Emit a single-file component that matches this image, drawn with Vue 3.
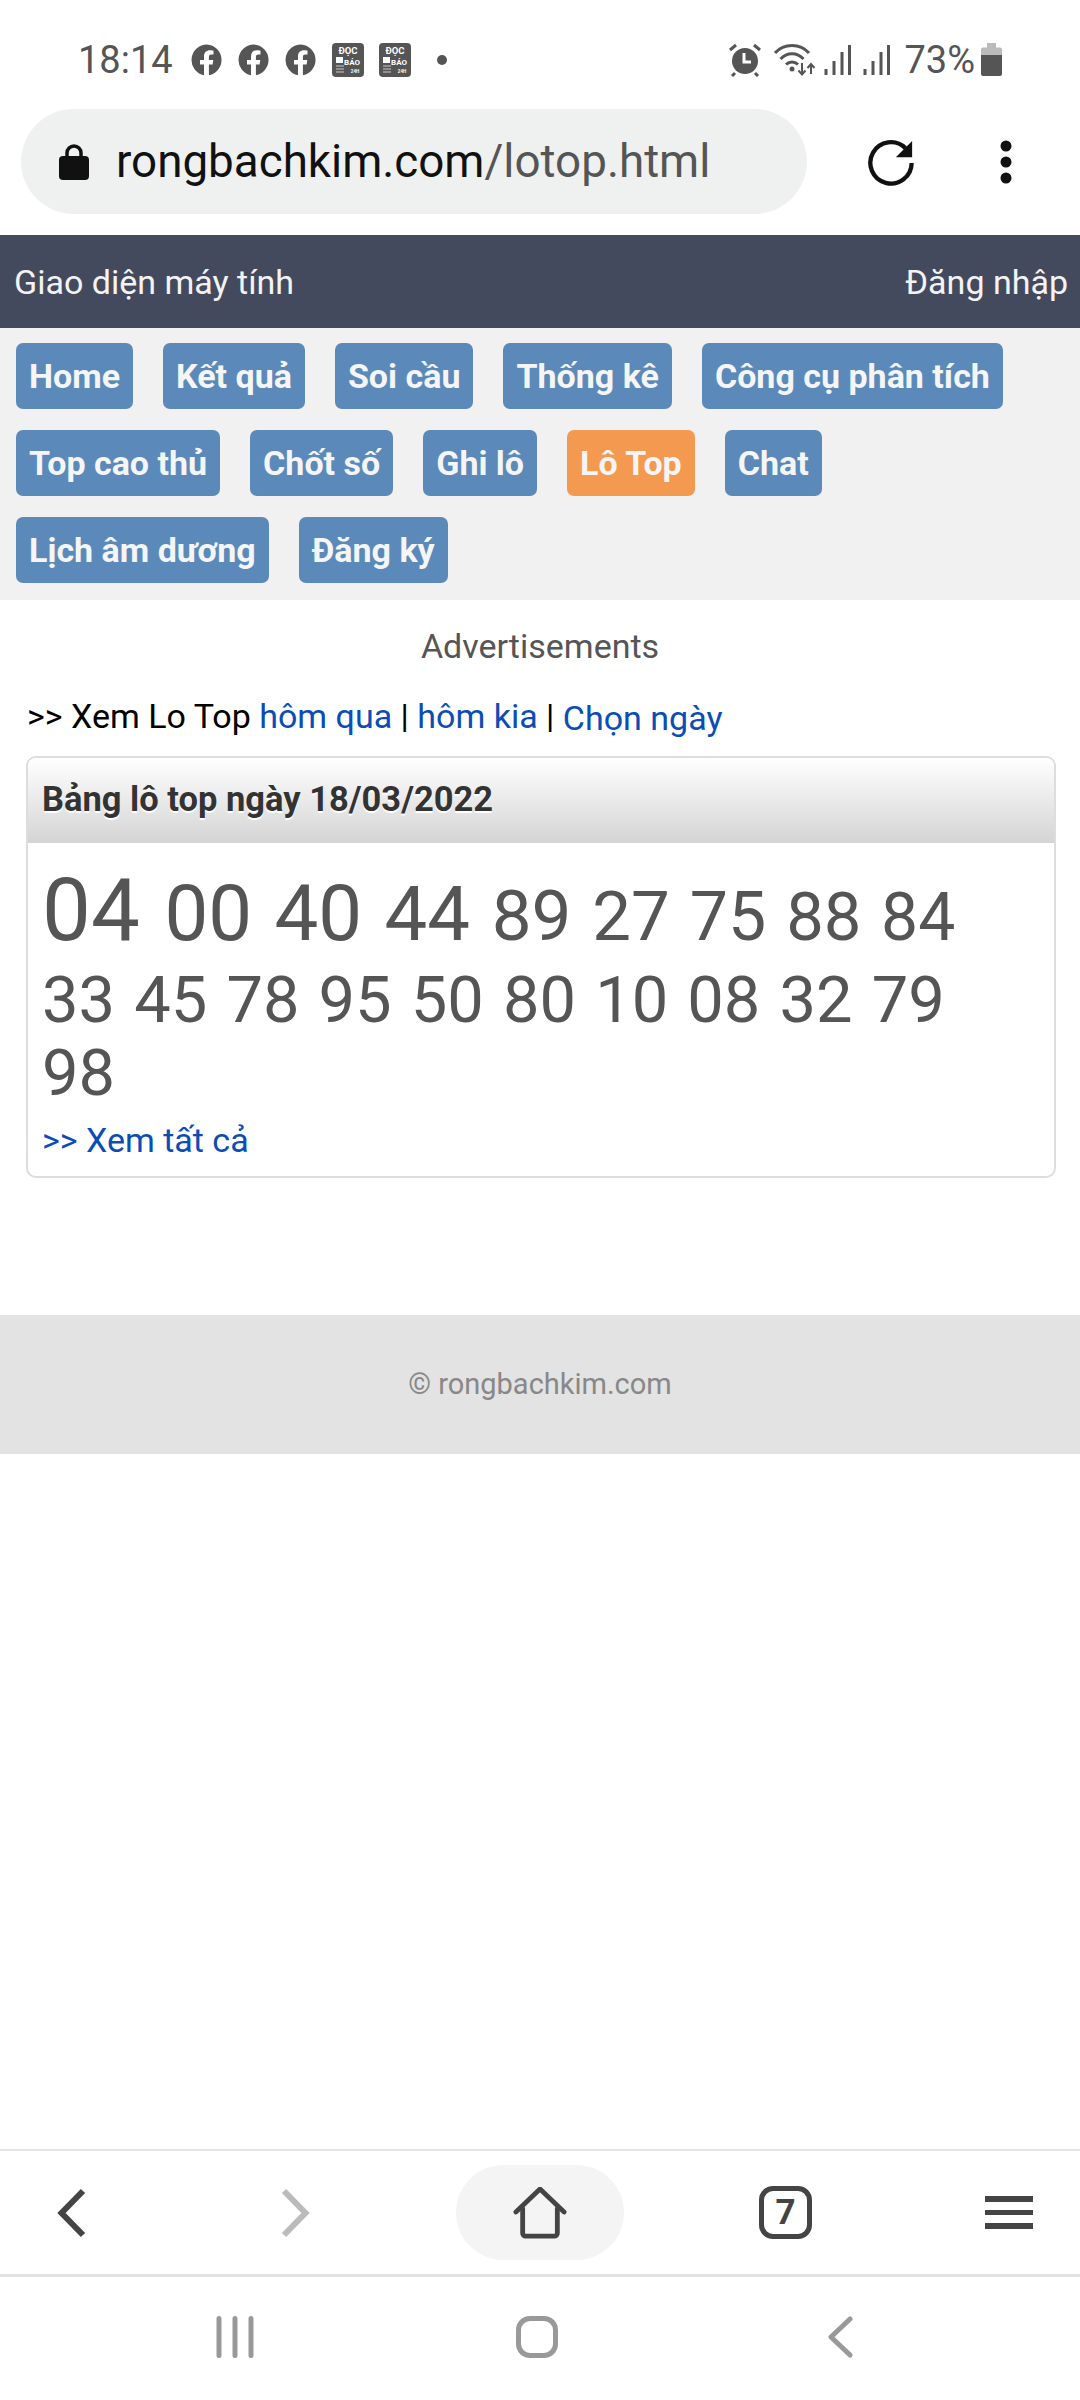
<script setup>
const navRows = [
  ["Home", "Kết quả", "Soi cầu", "Thống kê", "Công cụ phân tích"],
  ["Top cao thủ", "Chốt số", "Ghi lô", "Lô Top", "Chat"],
  ["Lịch âm dương", "Đăng ký"],
];

const topNumbers = [
  ["04", 87], ["00", 78], ["40", 78], ["44", 76], ["89", 71], ["27", 69], ["75", 68], ["88", 67], ["84", 66],
  ["33", 65], ["45", 65], ["78", 65], ["95", 65], ["50", 65], ["80", 65], ["10", 65], ["08", 65], ["32", 65], ["79", 65],
  ["98", 65],
];
</script>

<template>
  <div class="screen">
    <div class="status">
      <span class="time">18:14</span>
      <svg v-for="n in 3" :key="n" class="fb" viewBox="0 0 32 32" width="32" height="32">
        <path fill="#555" d="M16 0.5a15.5 15.5 0 0 0-3 30.7V20.5H9v-4.6h4v-3.4c0-4 2.4-6.2 6-6.2 1.7 0 3.5.3 3.500.3v3.900h-2c-2 0-2.600 1.200-2.600 2.500v2.900h4.400l-.7 4.600h-3.700v10.700A15.500 15.500 0 0 0 16 .5z"/>
      </svg>
      <svg v-for="n in 2" :key="'d' + n" class="doc" viewBox="0 0 32 34" width="32" height="34">
        <rect width="32" height="34" rx="4" fill="#555"/>
        <text x="16" y="11" class="doc-t" text-anchor="middle">ĐỌC</text>
        <rect x="4" y="14" width="7" height="6" fill="#fff"/>
        <text x="20" y="22" class="doc-s" text-anchor="middle">BÁO</text>
        <path d="M4 23h8M4 26h8M4 29h8" stroke="#ccc" stroke-width="1.2"/>
        <text x="23" y="30" class="doc-h" text-anchor="middle">24H</text>
      </svg>
      <span class="dot"></span>
      <span class="status-fill"></span>
      <svg class="alarm" viewBox="0 0 34 34" width="34" height="34">
        <circle cx="17" cy="18" r="13" fill="#555"/>
        <path d="M2 7l6-5M32 7l-6-5M7 30l-3 3M27 30l3 3" stroke="#555" stroke-width="3" fill="none"/>
        <path d="M16 10v9h7" stroke="#fff" stroke-width="3" fill="none"/>
      </svg>
      <svg class="wifi" viewBox="0 0 42 34" width="42" height="34">
        <path d="M1 10C10 0 26 0 35 10M6.500 16C13 9 23 9 29.500 16M12 21.500C15.500 18 20.500 18 24 21.500" stroke="#555" stroke-width="3" fill="none"/>
        <circle cx="18" cy="26" r="2.500" fill="#555"/>
        <path d="M28 20v11M24.500 27.500l3.500 4 3.500-4M37 31V21M33.500 25l3.500-4 3.500 4" stroke="#555" stroke-width="2" fill="none"/>
      </svg>
      <svg class="signal" viewBox="0 0 27 30" width="27" height="30">
        <path d="M2 30v-6M10 30V16M18 30V7M25.500 30V0" stroke="#555" stroke-width="3" fill="none"/>
      </svg>
      <svg class="signal second" viewBox="0 0 27 30" width="27" height="30">
        <path d="M2 30v-6M10 30V16M18 30V7M25.500 30V0" stroke="#555" stroke-width="3" fill="none"/>
      </svg>
      <span class="percent">73%</span>
      <svg class="battery" viewBox="0 0 21 33" width="21" height="33">
        <path d="M6 0h9v4.500h4a2 2 0 0 1 2 2V12H0V6.500a2 2 0 0 1 2-2h4z" fill="#bbb"/>
        <path d="M0 12h21v19a2 2 0 0 1-2 2H2a2 2 0 0 1-2-2z" fill="#555"/>
      </svg>
    </div>

    <div class="toolbar">
      <div class="urlbar">
        <svg class="lock" viewBox="0 0 30 36" width="30" height="36">
          <path d="M8 14V9a7 7 0 0 1 14 0v5" stroke="#111" stroke-width="3.500" fill="none"/>
          <rect y="12" width="30" height="24" rx="4" fill="#111"/>
        </svg>
        <span class="url">rongbachkim.com<span class="url-path">/lotop.html</span></span>
      </div>
      <svg class="reload" viewBox="0 0 50 50" width="48" height="48">
        <path d="M40 10.500A21.500 21.500 0 1 0 46.500 26" stroke="#111" stroke-width="4.500" fill="none"/>
        <path d="M47 3v17H30z" fill="#111"/>
      </svg>
      <svg class="more" viewBox="0 0 12 44" width="12" height="44">
        <circle cx="6" cy="6" r="5.500" fill="#111"/>
        <circle cx="6" cy="22" r="5.500" fill="#111"/>
        <circle cx="6" cy="38" r="5.500" fill="#111"/>
      </svg>
    </div>

    <div class="topbar">
      <span>Giao diện máy tính</span>
      <span>Đăng nhập</span>
    </div>

    <div class="nav">
      <div v-for="(row, i) in navRows" :key="i" class="nav-row">
        <a v-for="item in row" :key="item" class="nav-btn" :class="{ active: item === 'Lô Top' }">{{ item }}</a>
      </div>
    </div>

    <div class="ads">Advertisements</div>

    <p class="links">
      &gt;&gt; Xem Lo Top <a>hôm qua</a> | <a>hôm kia</a> | <a class="pick">Chọn ngày</a>
    </p>

    <div class="card">
      <div class="card-head">Bảng lô top ngày 18/03/2022</div>
      <div class="card-body">
        <div class="numbers">
          <span v-for="item in topNumbers" :key="item[0]" :style="{ fontSize: item[1] + 'px' }">{{ item[0] + " " }}</span>
        </div>
        <a class="see-all">&gt;&gt; Xem tất cả</a>
      </div>
    </div>

    <div class="footer">© rongbachkim.com</div>

    <div class="fill"></div>

    <div class="browser-bar">
      <svg class="back" viewBox="0 0 29 50" width="29" height="50">
        <path d="M26 3L4.500 25 26 47" stroke="#444" stroke-width="6" fill="none"/>
      </svg>
      <svg class="forward" viewBox="0 0 29 50" width="29" height="50">
        <path d="M3 3l21.500 22L3 47" stroke="#bbb" stroke-width="6" fill="none"/>
      </svg>
      <div class="home-pill">
        <svg viewBox="0 0 54 54" width="54" height="52">
          <path d="M2 26L27 2l25 24" stroke="#444" stroke-width="5" stroke-linecap="round" stroke-linejoin="round" fill="none"/>
          <path d="M9 21v27a3 3 0 0 0 3 3h30a3 3 0 0 0 3-3V21" stroke="#444" stroke-width="5" fill="none"/>
        </svg>
      </div>
      <div class="tabs">7</div>
      <div class="menu"><i></i><i></i><i></i></div>
    </div>

    <div class="system-bar">
      <svg class="recents" viewBox="0 0 38 42" width="38" height="42">
        <path d="M3 2.500v37M19 2.500v37M35 2.500v37" stroke="#999" stroke-width="5" stroke-linecap="round" fill="none"/>
      </svg>
      <span class="sys-home"></span>
      <svg class="sys-back" viewBox="0 0 25 42" width="25" height="42">
        <path d="M22 3L3 21l19 18" stroke="#999" stroke-width="5" stroke-linecap="round" stroke-linejoin="round" fill="none"/>
      </svg>
    </div>
  </div>
</template>

<style scoped>
.screen {
  width: 1080px;
  height: 2400px;
  display: flex;
  flex-direction: column;
  background: #fff;
  font-family: Roboto, sans-serif;
  overflow: hidden;
}
.status {
  height: 109px;
  box-sizing: border-box;
  padding: 10px 78px 0 78px;
  display: flex;
  align-items: center;
  color: #555;
}
.time {
  font-size: 38px;
  width: 113px;
}
.fb {
  margin-right: 15px;
}
.doc {
  margin-right: 15px;
}
.doc-t {
  font: 700 9.500px Roboto, sans-serif;
  fill: #fff;
}
.doc-s {
  font: 700 8px Roboto, sans-serif;
  fill: #fff;
}
.doc-h {
  font: 700 4.500px Roboto, sans-serif;
  fill: #fff;
}
.dot {
  width: 10px;
  height: 10px;
  border-radius: 50%;
  background: #555;
  margin-left: 11px;
}
.status-fill {
  flex: 1;
}
.wifi {
  margin-left: 12px;
}
.signal {
  margin-left: 8px;
}
.signal.second {
  margin-left: 12px;
}
.percent {
  font-size: 38px;
  margin-left: 14px;
}
.battery {
  margin-left: 6px;
}
.toolbar {
  height: 126px;
  display: flex;
  align-items: flex-start;
  padding-left: 21px;
}
.urlbar {
  width: 786px;
  height: 105px;
  border-radius: 53px;
  background: #eff1f1;
  display: flex;
  align-items: center;
  padding-left: 38px;
  box-sizing: border-box;
}
.url {
  font-size: 45.750px;
  color: #111;
  margin-left: 27px;
}
.url-path {
  color: #555;
}
.reload {
  margin: 29px 0 0 60px;
}
.more {
  margin: 31px 0 0 85px;
}
.topbar {
  height: 93px;
  box-sizing: border-box;
  background: #434a5e;
  color: #f3f3f3;
  font-size: 34px;
  padding: 0 12px 0 14px;
  display: flex;
  align-items: center;
  justify-content: space-between;
}
.nav {
  background: #f1f1f1;
  padding: 15px 16px 15px;
  height: 272px;
  box-sizing: border-box;
  display: flex;
  flex-direction: column;
  gap: 21px;
}
.nav-row {
  display: flex;
  gap: 30px;
}
.nav-btn {
  height: 66px;
  box-sizing: border-box;
  padding: 0 13px;
  display: flex;
  align-items: center;
  background: #5b8aba;
  color: #f5f5f5;
  font-size: 34px;
  font-weight: 700;
  border-radius: 7px;
}
.nav-btn.active {
  background: #f49950;
}
.ads {
  margin-top: 27px;
  text-align: center;
  font-size: 34px;
  line-height: 38px;
  color: #555;
}
.links {
  margin: 32px 0 0 27px;
  font-size: 34px;
  line-height: 38px;
  color: #000;
}
.links a {
  color: #0b4db5;
}
.links .pick {
  position: relative;
  top: 2px;
}
.card {
  margin: 21px 24px 0 26px;
  border: 2px solid #ddd;
  border-radius: 10px;
  overflow: hidden;
}
.card-head {
  height: 85px;
  box-sizing: border-box;
  padding: 0 14px 4px;
  display: flex;
  align-items: center;
  background: linear-gradient(#fff, #d4d4d4);
  font-size: 34.500px;
  font-weight: 700;
  color: #333;
  text-shadow: 0 2px 1px #fff;
}
.card-body {
  padding: 14px 14px 17px;
}
.numbers {
  color: #555;
  width: 960px;
  word-spacing: 3px;
}
.numbers span {
  line-height: 1.12;
}
.numbers span:first-child {
  line-height: 1.23;
}
.see-all {
  display: block;
  margin-top: 11px;
  font-size: 34px;
  line-height: 38px;
  color: #0b4db5;
}
.footer {
  margin-top: 137px;
  height: 139px;
  background: #e3e3e3;
  color: #888;
  font-size: 29px;
  display: flex;
  align-items: center;
  justify-content: center;
}
.fill {
  flex: 1;
}
.browser-bar {
  height: 128px;
  box-sizing: border-box;
  border-top: 2px solid #e2e2e2;
  border-bottom: 3px solid #e2e2e2;
  display: flex;
  align-items: center;
  padding-left: 57px;
}
.forward {
  margin-left: 195px;
}
.home-pill {
  margin-left: 146px;
  width: 168px;
  height: 95px;
  border-radius: 48px;
  background: #f4f4f4;
  display: flex;
  align-items: center;
  justify-content: center;
}
.tabs {
  margin-left: 135px;
  width: 53px;
  height: 53px;
  box-sizing: border-box;
  border: 5px solid #444;
  border-radius: 14px;
  color: #444;
  font-size: 35px;
  font-weight: 700;
  display: flex;
  align-items: center;
  justify-content: center;
}
.menu {
  margin-left: 173px;
  width: 48px;
  display: flex;
  flex-direction: column;
  gap: 8px;
}
.menu i {
  display: block;
  height: 5.500px;
  background: #444;
}
.system-bar {
  height: 123px;
  display: flex;
  align-items: center;
  padding-left: 216px;
  padding-bottom: 3px;
  box-sizing: border-box;
}
.sys-home {
  margin-left: 262px;
  width: 42px;
  height: 42px;
  box-sizing: border-box;
  border: 5px solid #999;
  border-radius: 14px;
}
.sys-back {
  margin-left: 270px;
}
</style>
